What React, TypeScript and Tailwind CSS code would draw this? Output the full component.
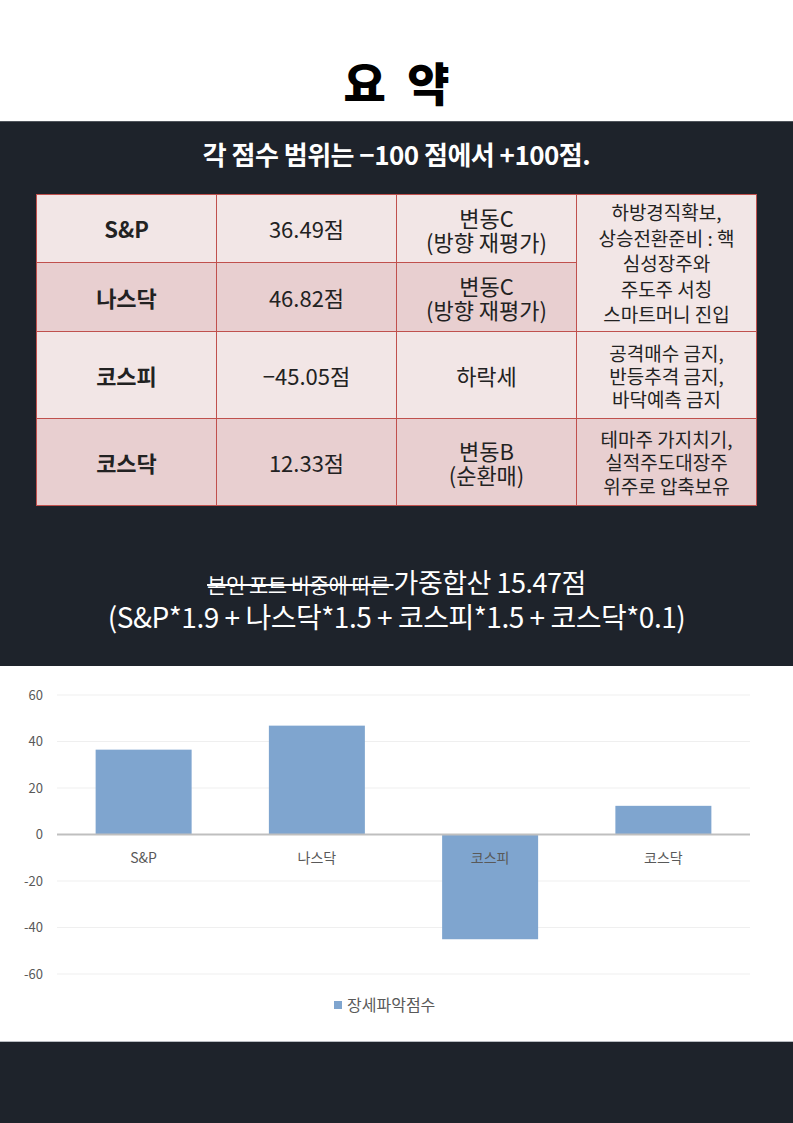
import React from 'react';

type Row = {
  name: string;
  score: string;
  trend: string[];
  shade: 'light' | 'dark';
};

const ROWS: Row[] = [
  { name: 'S&P', score: '36.49점', trend: ['변동C', '(방향 재평가)'], shade: 'light' },
  { name: '나스닥', score: '46.82점', trend: ['변동C', '(방향 재평가)'], shade: 'dark' },
  { name: '코스피', score: '−45.05점', trend: ['하락세'], shade: 'light' },
  { name: '코스닥', score: '12.33점', trend: ['변동B', '(순환매)'], shade: 'dark' },
];

const STRATEGY_TOP = ['하방경직확보,', '상승전환준비 : 핵', '심성장주와', '주도주 서칭', '스마트머니 진입'];
const STRATEGY_KOSPI = ['공격매수 금지,', '반등추격 금지,', '바닥예측 금지'];
const STRATEGY_KOSDAQ = ['테마주 가지치기,', '실적주도대장주', '위주로 압축보유'];

const CHART = [
  { label: 'S&P', value: 36.49 },
  { label: '나스닥', value: 46.82 },
  { label: '코스피', value: -45.05 },
  { label: '코스닥', value: 12.33 },
];

const Lines = ({ lines }: { lines: string[] }) => (
  <>
    {lines.map((l) => (
      <div key={l}>{l}</div>
    ))}
  </>
);

const ScoreChart = () => {
  const zero = 168.5;
  const unit = 2.325;
  const left = 57;
  const right = 750;
  const slot = (right - left) / 4;
  const ticks = [60, 40, 20, 0, -20, -40, -60];

  return (
    <svg width="793" height="375" viewBox="0 0 793 375" className="block">
      {ticks.map((t) => {
        const y = zero - t * unit;
        return (
          <g key={t}>
            {t !== 0 && <line x1={left} x2={right} y1={y} y2={y} stroke="#efefef" strokeWidth="1" />}
            <text x="43" y={y + 4.5} textAnchor="end" fontSize="13" fill="#595959">
              {t}
            </text>
          </g>
        );
      })}
      {CHART.map((d, i) => {
        const cx = left + slot * i + slot / 2;
        const h = Math.abs(d.value) * unit;
        const y = d.value >= 0 ? zero - h : zero;
        return <rect key={d.label} x={cx - 48} y={y} width="96" height={h} fill="#7fa5cf" />;
      })}
      <line x1={left} x2={right} y1={zero} y2={zero} stroke="#bfbfbf" strokeWidth="2" />
      {CHART.map((d, i) => {
        const cx = left + slot * i + slot / 2;
        return (
          <text key={d.label} x={cx} y="197" textAnchor="middle" fontSize="14" fill="#595959">
            {d.label}
          </text>
        );
      })}
      <rect x="334" y="335" width="8" height="8" fill="#7fa5cf" />
      <text x="347" y="345" fontSize="16" fill="#595959">
        장세파악점수
      </text>
    </svg>
  );
};

export default function App() {
  const cell = 'border border-[#c0504d] text-center align-middle';
  const bg = (s: 'light' | 'dark') => (s === 'light' ? 'bg-[#f2e6e6]' : 'bg-[#e8cfd0]');

  return (
    <div className="w-[793px] h-[1123px] overflow-hidden bg-white font-['Noto_Sans_CJK_KR','Noto_Sans',sans-serif]">
      <header className="h-[121px] flex items-center justify-center pt-[40px]">
        <h1 className="text-[46px] leading-none font-black tracking-[0.12em] text-black pl-[0.12em]">요 약</h1>
      </header>

      <section className="h-[545px] bg-[#1e232b] border-t border-[#50555c] flex flex-col items-center">
        <h2 className="mt-[16px] text-[26px] leading-[32px] font-bold text-white tracking-[-0.02em]">
          각 점수 범위는 −100 점에서 +100점.
        </h2>

        <table className="mt-[24px] w-[720px] border-collapse text-[#222] table-fixed">
          <tbody>
            {ROWS.map((r, i) => (
              <tr key={r.name} className={i === 0 ? 'h-[68px]' : i === 1 ? 'h-[69px]' : 'h-[87px]'}>
                <td className={`${cell} ${bg(r.shade)} w-[180px] text-[22px] font-bold`}>{r.name}</td>
                <td className={`${cell} ${bg(r.shade)} w-[180px] text-[22px]`}>{r.score}</td>
                <td className={`${cell} ${bg(r.shade)} w-[180px] text-[22px] leading-[24px]`}>
                  <Lines lines={r.trend} />
                </td>
                {i === 0 && (
                  <td rowSpan={2} className={`${cell} bg-[#f2e6e6] w-[180px] text-[19px] leading-[25.5px]`}>
                    <Lines lines={STRATEGY_TOP} />
                  </td>
                )}
                {i === 2 && (
                  <td className={`${cell} bg-[#f2e6e6] text-[19px] leading-[23px]`}>
                    <Lines lines={STRATEGY_KOSPI} />
                  </td>
                )}
                {i === 3 && (
                  <td className={`${cell} bg-[#e8cfd0] text-[19px] leading-[23.5px]`}>
                    <Lines lines={STRATEGY_KOSDAQ} />
                  </td>
                )}
              </tr>
            ))}
          </tbody>
        </table>

        <div className="mt-[60px] text-white text-center tracking-[-0.03em]">
          <p className="text-[27px] leading-[32px]">
            <span className="text-[21px] line-through decoration-white">본인 포트 비중에 따른 </span>
            가중합산 15.47점
          </p>
          <p className="text-[28px] leading-[32px]">(S&amp;P*1.9 + 나스닥*1.5 + 코스피*1.5 + 코스닥*0.1)</p>
        </div>
      </section>

      <section className="h-[375px] bg-white">
        <ScoreChart />
      </section>

      <footer className="h-[82px] bg-[#1e232b] border-t border-[#b8bcc1]" />
    </div>
  );
}
